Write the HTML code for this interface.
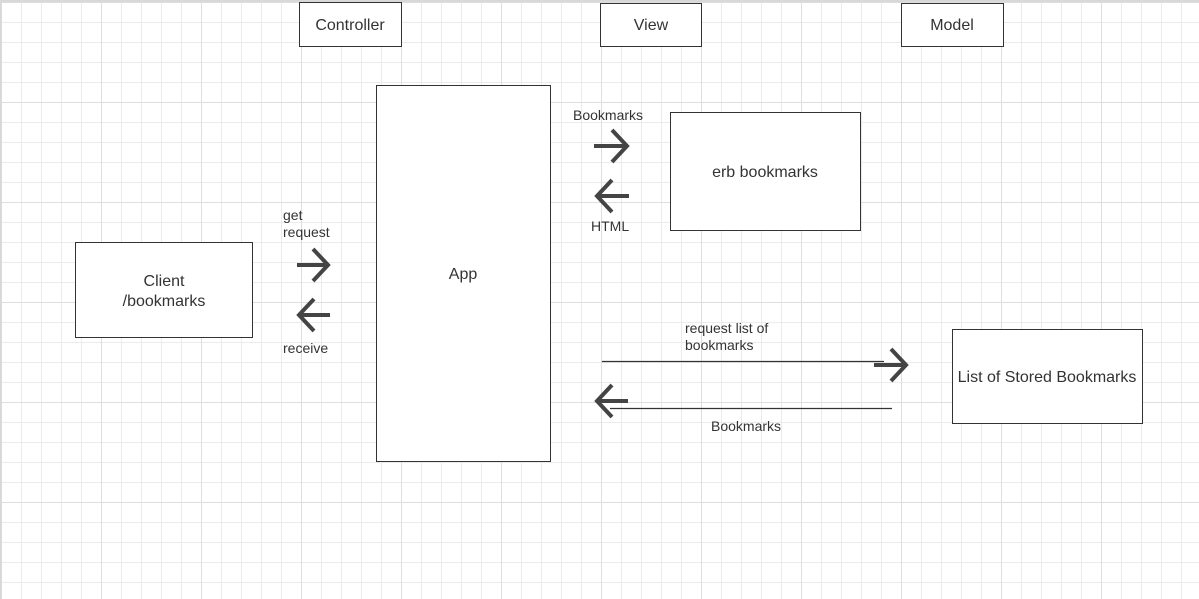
<!DOCTYPE html>
<html><head><meta charset="utf-8"><style>
body{margin:0;width:1199px;height:599px;overflow:hidden;background:#fff;font-family:"Liberation Sans",sans-serif}
</style></head><body>
<svg width="1199" height="599" xmlns="http://www.w3.org/2000/svg" style="display:block">
<defs>
<pattern id="g" x="1" y="2" width="20" height="20" patternUnits="userSpaceOnUse"><path d="M0.5 0V20M0 0.5H20" stroke="#ebebeb" stroke-width="1" fill="none"/></pattern>
<pattern id="G" x="1" y="2" width="100" height="100" patternUnits="userSpaceOnUse"><path d="M0.5 0V100M0 0.5H100" stroke="#dedede" stroke-width="1" fill="none"/></pattern>
</defs>
<rect width="1199" height="599" fill="url(#g)"/>
<rect width="1199" height="599" fill="url(#G)"/>
<rect x="0" y="0" width="1199" height="2" fill="#d8d8d8"/>
<rect x="0" y="0" width="1.5" height="599" fill="#d8d8d8"/>
<g fill="#fff" stroke="#333" stroke-width="1">
<rect x="299.5" y="2.5" width="102" height="44"/>
<rect x="600.5" y="3.5" width="101" height="43"/>
<rect x="901.5" y="3.5" width="102" height="43"/>
<rect x="376.5" y="85.5" width="174" height="376"/>
<rect x="670.5" y="112.5" width="190" height="118"/>
<rect x="75.5" y="242.5" width="177" height="95"/>
<rect x="952.5" y="329.5" width="190" height="94"/>
</g>
<g fill="#333" font-size="16" text-anchor="middle">
<text x="350" y="30">Controller</text>
<text x="651" y="30">View</text>
<text x="952" y="30">Model</text>
<text x="463" y="279">App</text>
<text x="765" y="177">erb bookmarks</text>
<text x="164" y="286">Client</text>
<text x="164" y="306">/bookmarks</text>
<text x="1047" y="382">List of Stored Bookmarks</text>
</g>
<g fill="#333" font-size="14">
<text x="283" y="220">get</text>
<text x="283" y="237">request</text>
<text x="283" y="353">receive</text>
<text x="573" y="120">Bookmarks</text>
<text x="591" y="231">HTML</text>
<text x="685" y="333">request list of</text>
<text x="685" y="350">bookmarks</text>
<text x="711" y="431">Bookmarks</text>
</g>
<g stroke="#444" stroke-width="4" fill="none">
<path d="M297 265H328M313 249L328 265L313 281"/>
<path d="M330 315H299M314 299L299 315L314 331"/>
<path d="M594 146H627M612 130L627 146L612 162"/>
<path d="M629 196H597M612 180L597 196L612 212"/>
<path d="M874 365H906M891 349L906 365L891 381"/>
<path d="M628 401H597M612 385L597 401L612 417"/>
</g>
<g stroke="#333" stroke-width="1.2">
<path d="M602 361.5H884"/>
<path d="M610 408.5H892"/>
</g>
</svg>
</body></html>
